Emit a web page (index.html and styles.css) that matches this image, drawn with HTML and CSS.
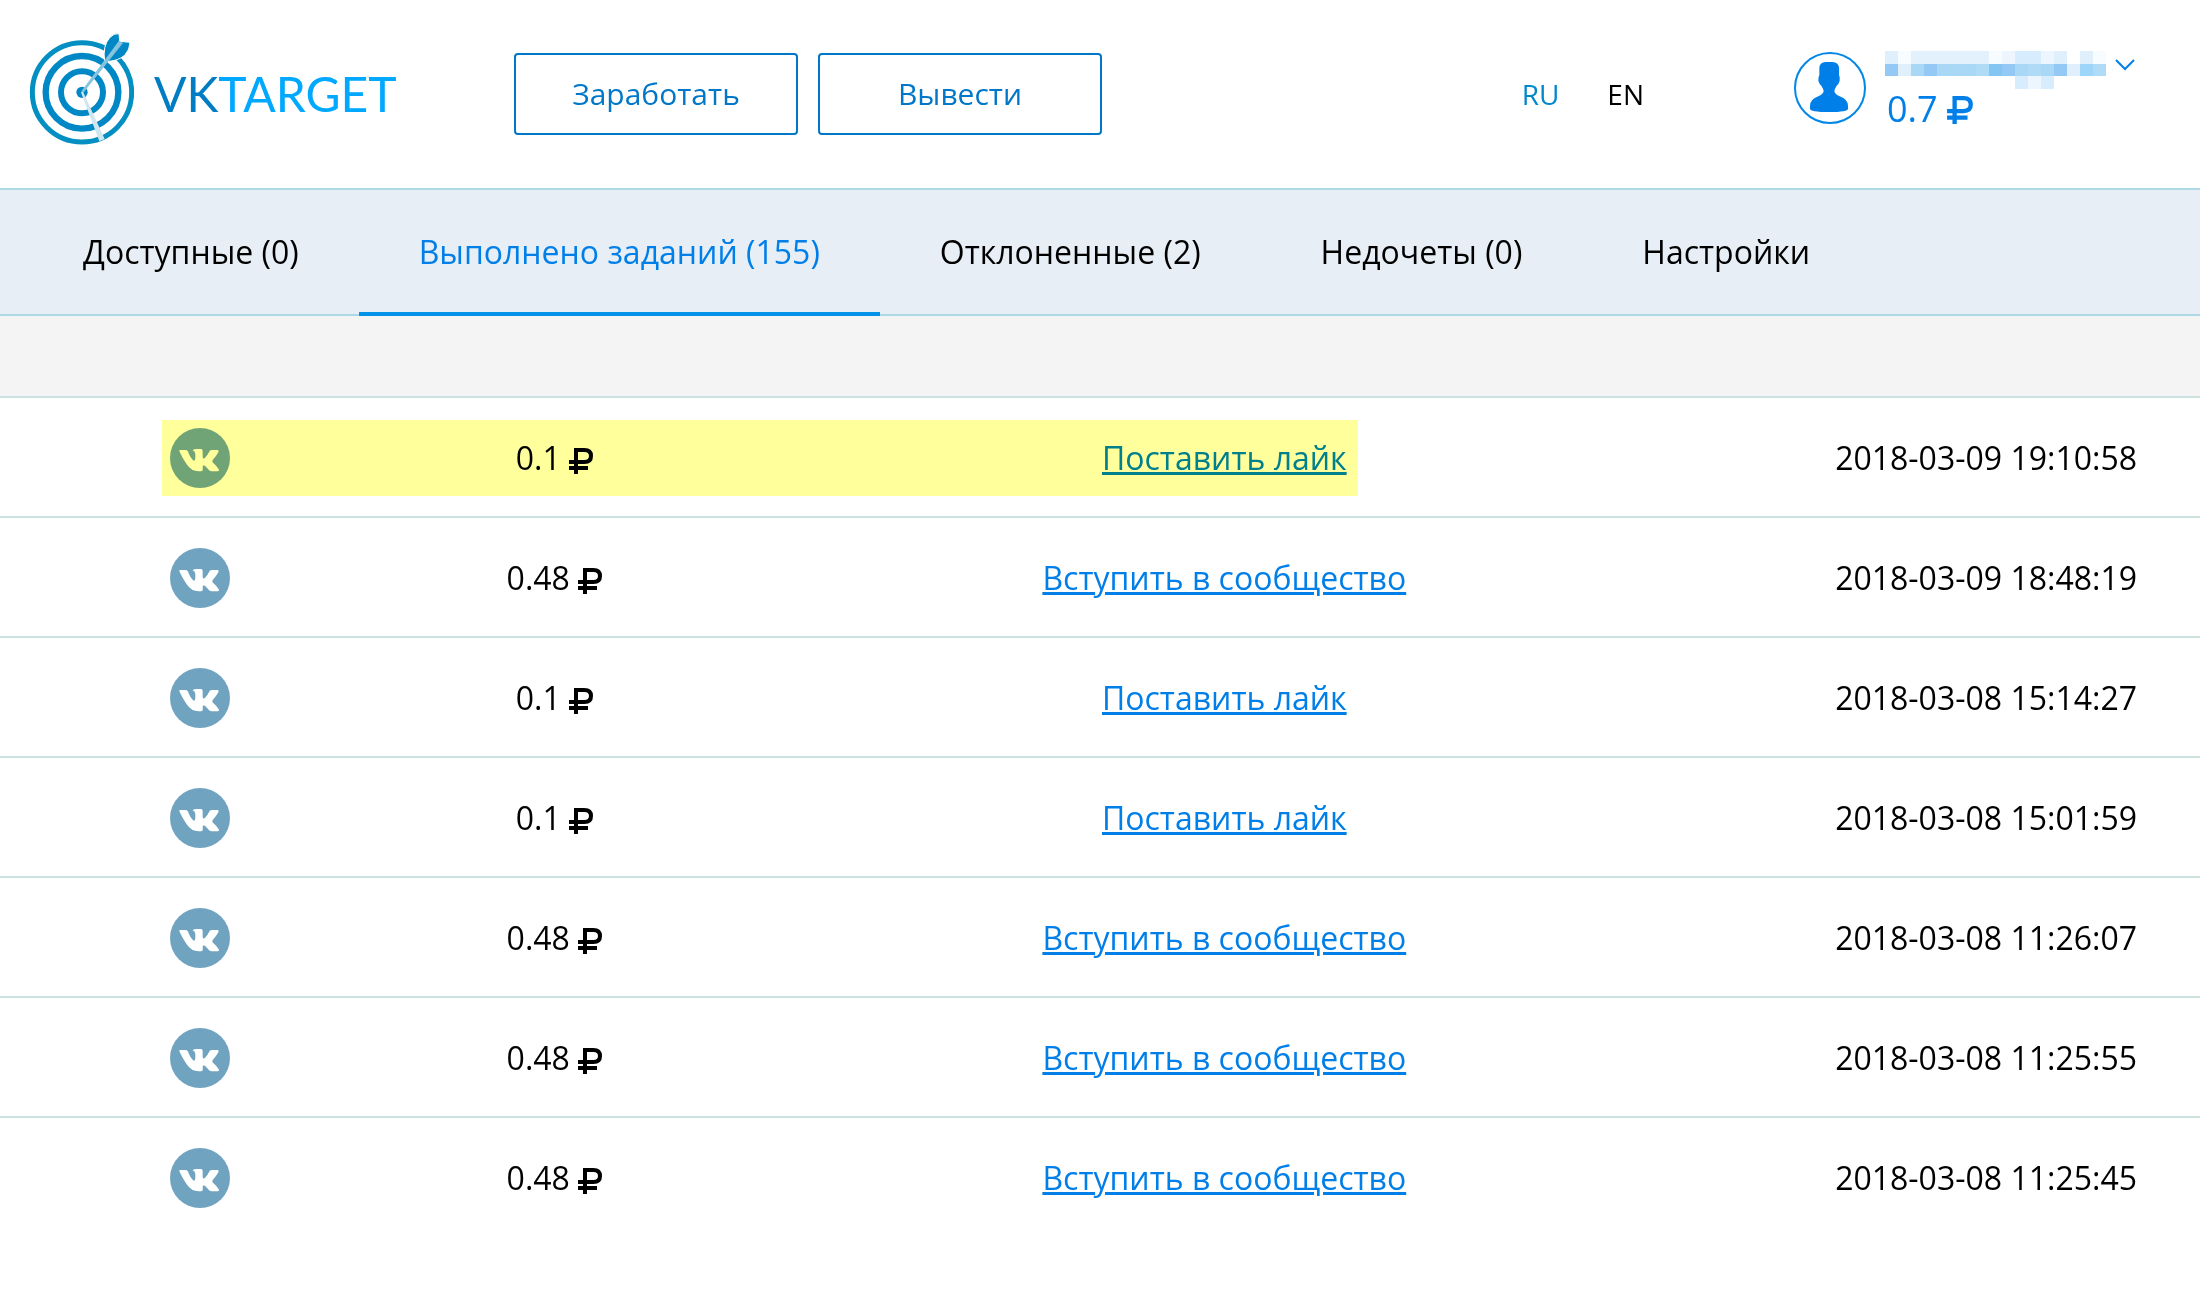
FILE: index.html
```html
<!DOCTYPE html>
<html lang="ru">
<head>
<meta charset="utf-8">
<title>VKTARGET</title>
<link rel="stylesheet" href="styles.css">
</head>
<body>
<svg class="defs" aria-hidden="true">
  <symbol id="vk" viewBox="0 0 180 180">
    <circle cx="90" cy="90" r="90" fill="#70a3c0"/>
    <path fill="#fff" d="M31 66H48Q52 66 54 71Q62 91 71 98Q76 99 76 90V78Q76 70 68 67Q71 63 80 63H93Q98 63 98 70V88Q99 95 105 89Q113 81 119 69Q121 66 125 66H143Q148 67 145 73Q140 83 128 96Q125 100 129 104Q142 115 147 125Q148 130 142 130H125Q120 130 116 125Q107 114 102 112Q98 112 98 119V125Q98 130 93 130H86Q64 130 50 109Q38 92 28 70Q27 66 31 66Z"/>
  </symbol>
  <symbol id="rub" viewBox="0 0 72 78">
    <path fill="none" stroke="currentColor" stroke-width="12" d="M21 78V6H46Q66 6 66 24T46 42H0M0 60H57"/>
  </symbol>
</svg>

<header class="header">
  <a class="logo" href="#">
    <svg class="logo-mark" viewBox="84 66 318 342" aria-hidden="true">
      <g fill="none" stroke="#0087c5">
        <circle cx="246" cy="247" r="149" stroke-width="15" stroke="#038fc1"/>
        <circle cx="246" cy="247" r="109" stroke-width="19"/>
        <circle cx="246" cy="247" r="63" stroke-width="18"/>
      </g>
      <circle cx="246" cy="247" r="17" fill="#0087c5"/>
      <path fill="#0087c5" stroke="#fff" stroke-width="3" d="M314 154Q307 108 329 83Q342 69 357 71L359 94L390 97Q390 118 374 136Q352 155 314 154Z"/>
      <path fill="#86c3df" d="M357 92L369 99L250 248L244 244Z"/>
      <path fill="#cfe5ef" d="M243 247L249 245L314 387L298 394Z"/>
    </svg>
    <span class="logo-text"><span class="logo-vk">VK</span>TARGET</span>
  </a>
  <div class="actions">
    <button class="btn" type="button">Заработать</button>
    <button class="btn" type="button">Вывести</button>
  </div>
  <nav class="langs">
    <a class="lang lang-other" href="#">RU</a>
    <a class="lang" href="#">EN</a>
  </nav>
  <div class="user">
    <svg class="avatar" viewBox="0 0 216 216" aria-hidden="true">
      <circle cx="108" cy="108" r="105" fill="#fff" stroke="#0087e8" stroke-width="6"/>
      <path fill="#007fe8" d="M76 50Q76 30 95 30H115Q135 30 135 50V70Q139 75 137 86Q134 97 128 101Q122 110 121 118Q123 127 137 133Q162 142 162 162V170Q162 180 105 180T48 170V162Q48 142 73 133Q87 127 89 118Q88 110 82 101Q76 97 73 86Q72 75 76 70Z"/>
    </svg>
    <div class="account">
      <div class="name-row">
        <svg class="name-mask" viewBox="0 0 17 3" preserveAspectRatio="none" shape-rendering="crispEdges" aria-hidden="true">
          <path fill="#e0effc" d="M0 0h1v1h-1zM13 0h1v1h-1zM15 0h1v1h-1zM1 1h1v1h-1zM14 1h1v1h-1z"/>
          <path fill="#f6fcff" d="M1 0h1v1h-1zM8 0h1v1h-1zM16 0h1v1h-1z"/>
          <path fill="#e3f1fc" d="M2 0h6v1h-6z"/>
          <path fill="#edf6fe" d="M9 0h1v1h-1zM12 0h1v1h-1zM11 2h1v1h-1z"/>
          <path fill="#d7ecfc" d="M10 0h2v1h-2zM10 2h1v1h-1zM12 2h1v1h-1z"/>
          <path fill="#93c9f4" d="M0 1h1v1h-1zM3 1h1v1h-1zM9 1h1v1h-1zM13 1h1v1h-1z"/>
          <path fill="#a9d8f7" d="M2 1h1v1h-1zM4 1h3v1h-3zM10 1h1v1h-1zM12 1h1v1h-1z"/>
          <path fill="#b0dbf6" d="M7 1h1v1h-1zM11 1h1v1h-1zM16 1h1v1h-1z"/>
          <path fill="#84c6f3" d="M8 1h1v1h-1z"/>
          <path fill="#9dd6f8" d="M15 1h1v1h-1z"/>
        </svg>
        <button class="chevron" type="button" aria-label="Меню">
          <svg viewBox="0 0 20 12" aria-hidden="true"><path d="M1 1L10 10L19 1" fill="none" stroke="currentColor" stroke-width="2"/></svg>
        </button>
      </div>
      <div class="balance">0.7 <svg class="rub rub-large" aria-hidden="true"><use href="#rub"/></svg></div>
    </div>
  </div>
</header>

<nav class="tabs">
  <a class="tab" href="#">Доступные (0)</a>
  <a class="tab tab-active" href="#">Выполнено заданий (155)</a>
  <a class="tab" href="#">Отклоненные (2)</a>
  <a class="tab" href="#">Недочеты (0)</a>
  <a class="tab" href="#">Настройки</a>
</nav>
<div class="spacer"></div>

<table class="tasks">
  <colgroup><col class="col-net"><col class="col-price"><col class="col-task"><col></colgroup>
  <tbody>
  <tr class="marked"><td><svg class="vk"><use href="#vk"/></svg></td><td>0.1 <svg class="rub"><use href="#rub"/></svg></td><td><a href="#">Поставить лайк</a></td><td class="date">2018-03-09 19:10:58</td></tr>
  <tr><td><svg class="vk"><use href="#vk"/></svg></td><td>0.48 <svg class="rub"><use href="#rub"/></svg></td><td><a href="#">Вступить в сообщество</a></td><td class="date">2018-03-09 18:48:19</td></tr>
  <tr><td><svg class="vk"><use href="#vk"/></svg></td><td>0.1 <svg class="rub"><use href="#rub"/></svg></td><td><a href="#">Поставить лайк</a></td><td class="date">2018-03-08 15:14:27</td></tr>
  <tr><td><svg class="vk"><use href="#vk"/></svg></td><td>0.1 <svg class="rub"><use href="#rub"/></svg></td><td><a href="#">Поставить лайк</a></td><td class="date">2018-03-08 15:01:59</td></tr>
  <tr><td><svg class="vk"><use href="#vk"/></svg></td><td>0.48 <svg class="rub"><use href="#rub"/></svg></td><td><a href="#">Вступить в сообщество</a></td><td class="date">2018-03-08 11:26:07</td></tr>
  <tr><td><svg class="vk"><use href="#vk"/></svg></td><td>0.48 <svg class="rub"><use href="#rub"/></svg></td><td><a href="#">Вступить в сообщество</a></td><td class="date">2018-03-08 11:25:55</td></tr>
  <tr><td><svg class="vk"><use href="#vk"/></svg></td><td>0.48 <svg class="rub"><use href="#rub"/></svg></td><td><a href="#">Вступить в сообщество</a></td><td class="date">2018-03-08 11:25:45</td></tr>
  </tbody>
</table>
</body>
</html>
```

FILE: styles.css
```css
* { box-sizing: border-box; }

body {
  margin: 0;
  background: #fff;
  color: #000;
  font: 32px/44px "Open Sans", "Noto Sans", sans-serif;
}

.defs {
  position: absolute;
  width: 0;
  height: 0;
}

/* Header */
.header {
  display: flex;
  align-items: center;
  height: 188px;
  padding: 0 65px 0 28px;
}

.logo {
  display: flex;
  align-items: center;
  gap: 20px;
  width: 486px;
  color: #00a8ff;
  text-decoration: none;
}

.logo-mark {
  width: 106px;
  height: 114px;
  margin-bottom: 10px;
}

.logo-text {
  font: 48px/56px Lato, "Open Sans", sans-serif;
}

.logo-vk { color: #007cc4; }

.actions {
  display: flex;
  gap: 20px;
}

.btn {
  width: 284px;
  height: 82px;
  padding: 0;
  border: 2px solid #0077c8;
  border-radius: 4px;
  background: #fff;
  color: #0077c8;
  font: inherit;
  font-size: 30px;
}

.langs {
  display: flex;
  gap: 48px;
  margin-left: auto;
  margin-right: 150px;
}

.lang {
  color: #000;
  font-size: 28px;
  text-decoration: none;
}

.lang-other { color: #0088cc; }

.user {
  display: flex;
  align-items: center;
  gap: 19px;
  margin-bottom: 10px;
  color: #007fe8;
}

.avatar {
  width: 72px;
  height: 72px;
  margin-bottom: 2px;
}

.account { padding-top: 2px; }

.name-row {
  display: flex;
  align-items: flex-start;
  gap: 9px;
}

.name-mask {
  width: 221px;
  height: 38px;
}

.chevron {
  margin-top: 8px;
  padding: 0;
  border: 0;
  background: none;
  color: inherit;
  line-height: 0;
}

.chevron svg {
  width: 20px;
  height: 12px;
}

.balance {
  padding-left: 2px;
  font-size: 36px;
  line-height: 40px;
}

/* Tabs */
.tabs {
  display: flex;
  height: 128px;
  padding-left: 23px;
  border-top: 2px solid #add8e6;
  border-bottom: 2px solid #add8e6;
  background: #e7eef5;
}

.tab {
  display: flex;
  align-items: center;
  margin-bottom: -2px;
  padding: 2px 60px 0;
  border-bottom: 4px solid transparent;
  color: #000;
  text-decoration: none;
  white-space: nowrap;
}

.tab-active {
  border-color: #0093e9;
  color: #007fe8;
}

.spacer {
  height: 82px;
  border-bottom: 2px solid #cde0e0;
  background: #f4f4f4;
}

/* Completed tasks */
.tasks {
  width: 100%;
  border-spacing: 0;
  table-layout: fixed;
}

.col-net { width: 18.2%; }
.col-price { width: 14%; }
.col-task { width: 46.9%; }

.tasks tr { position: relative; }

.tasks td {
  height: 120px;
  padding: 2px 0 0;
  border-bottom: 2px solid #cde0e0;
  text-align: center;
  vertical-align: middle;
}

.tasks tr:last-child td { border-bottom-color: transparent; }

.tasks .date {
  padding-right: 63px;
  text-align: right;
}

.tasks a {
  color: #007fe8;
}

.vk {
  display: block;
  width: 60px;
  height: 60px;
  margin: 0 auto;
}

.rub {
  width: 24px;
  height: 26px;
  vertical-align: -4px;
}

.rub-large {
  width: 26px;
  height: 28px;
  vertical-align: -2px;
}

/* Marker stroke laid over the first row */
.marked td:first-child::after {
  content: "";
  position: absolute;
  top: 22px;
  left: calc(9.1% - 38px);
  right: calc(44.4% - 135px);
  height: 76px;
  background: #ffff9b;
  mix-blend-mode: multiply;
}
```
